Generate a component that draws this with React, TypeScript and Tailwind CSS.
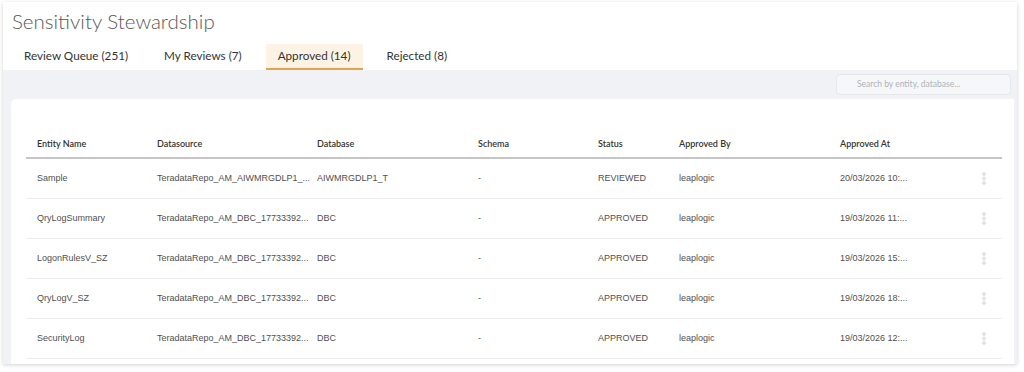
import { useState } from "react"

const TABS = [
  { label: "Review Queue (251)" },
  { label: "My Reviews (7)" },
  { label: "Approved (14)" },
  { label: "Rejected (8)" },
]

const COLUMNS = ["Entity Name", "Datasource", "Database", "Schema", "Status", "Approved By", "Approved At", ""]

// widths tuned to the reference column starts
const GRID = "grid grid-cols-[120px_160px_161px_120px_81px_161px_140px_32px]"

const ROWS = [
  ["Sample", "TeradataRepo_AM_AIWMRGDLP1_...", "AIWMRGDLP1_T", "-", "REVIEWED", "leaplogic", "20/03/2026 10:..."],
  ["QryLogSummary", "TeradataRepo_AM_DBC_17733392...", "DBC", "-", "APPROVED", "leaplogic", "19/03/2026 11:..."],
  ["LogonRulesV_SZ", "TeradataRepo_AM_DBC_17733392...", "DBC", "-", "APPROVED", "leaplogic", "19/03/2026 15:..."],
  ["QryLogV_SZ", "TeradataRepo_AM_DBC_17733392...", "DBC", "-", "APPROVED", "leaplogic", "19/03/2026 18:..."],
  ["SecurityLog", "TeradataRepo_AM_DBC_17733392...", "DBC", "-", "APPROVED", "leaplogic", "19/03/2026 12:..."],
]

function Kebab() {
  return (
    <svg width="6" height="13" viewBox="0 0 6 13" fill="none" stroke="#cfd2d6" strokeWidth="1">
      <circle cx="3" cy="2" r="1.3" />
      <circle cx="3" cy="6.5" r="1.3" />
      <circle cx="3" cy="11" r="1.3" />
    </svg>
  )
}

export default function App() {
  const [active, setActive] = useState(2)

  return (
    <div className="w-[1024px] h-[372px] bg-white pl-[3px] pt-[2px] font-['Lato',sans-serif]">
      <div className="w-[1014px] h-[362px] flex flex-col bg-white shadow-[0_1px_4px_rgba(0,0,0,0.18)] overflow-hidden">
        {/* Page header */}
        <div className="h-[68px] flex flex-col pl-[9px]">
          <h1 className="pt-[5px] h-[42px] text-[20.5px] font-light leading-[28px] text-[#585858]">
            Sensitivity Stewardship
          </h1>
          <div className="flex gap-[12px] h-[26px]">
            {TABS.map((tab, i) => (
              <button
                key={tab.label}
                onClick={() => setActive(i)}
                className={`px-[12px] h-[26px] text-[11.7px] text-[#333] border-b-2 ${
                  i === active ? "bg-[#fdf3e5] border-[#e2a251]" : "border-transparent"
                }`}
              >
                {tab.label}
              </button>
            ))}
          </div>
        </div>

        {/* Content area */}
        <div className="flex-1 flex flex-col bg-[#f1f2f6] pl-[8px] pr-[3px]">
          <div className="h-[29px] flex items-center justify-end pr-[3px]">
            <div className="w-[175px] h-[21px] flex items-center pl-[20px] bg-[#f6f7f9] border border-[#e5e7eb] rounded-[4px] text-[8.5px] text-[#aeb2ba]">
              Search by entity, database...
            </div>
          </div>

          <div className="flex-1 bg-white rounded-tl-[5px] pl-[15px] pr-[12px] pt-[32px]">
            <div className={`${GRID} h-[28px] items-center border-b-2 border-[#c6c6c6] text-[9px] font-semibold text-[#333]`}>
              {COLUMNS.map((c, i) => (
                <div key={i} className="pl-[11px]">{c}</div>
              ))}
            </div>
            {ROWS.map((row) => (
              <div
                key={row[0]}
                className={`${GRID} h-[40px] items-center border-b border-[#ececec] text-[9px] text-[#505050] font-['Liberation_Sans',sans-serif]`}
              >
                {row.map((cell, i) => (
                  <div key={i} className="pl-[11px] whitespace-nowrap">{cell}</div>
                ))}
                <div className="pl-[12px] flex items-center">
                  <Kebab />
                </div>
              </div>
            ))}
          </div>
        </div>
      </div>
    </div>
  )
}
